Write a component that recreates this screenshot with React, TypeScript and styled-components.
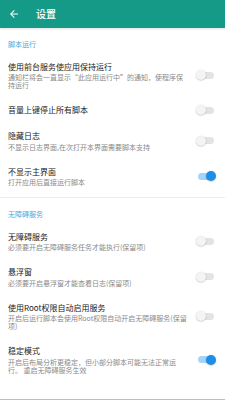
import React, { useState } from 'react';
import styled, { createGlobalStyle } from 'styled-components';

const GlobalStyle = createGlobalStyle`
  html, body {
    margin: 0;
    padding: 0;
    background: #ffffff;
  }
  body {
    font-family: "Noto Sans CJK SC", "Noto Sans", sans-serif;
    -webkit-font-smoothing: antialiased;
  }
`;

const Page = styled.div`
  width: 225px;
  min-height: 400px;
  display: flex;
  flex-direction: column;
  background: #ffffff;
`;

const Toolbar = styled.header`
  height: 28px;
  flex: 0 0 28px;
  display: flex;
  align-items: center;
  padding-left: 8px;
  background: #159a88;
  box-shadow: 0 1px 2px rgba(0, 0, 0, 0.12);
`;

const BackIcon = styled.svg`
  width: 12px;
  height: 12px;
  fill: #ffffff;
`;

const ToolbarTitle = styled.h1`
  margin: 0 0 0 16px;
  font-size: 10px;
  line-height: 12px;
  font-weight: 500;
  color: #ffffff;
`;

const List = styled.main`
  flex: 1;
  display: flex;
  flex-direction: column;
`;

const Category = styled.section`
  display: flex;
  flex-direction: column;
`;

const CategoryTitle = styled.div`
  padding: 11.5px 8px 5px;
  font-size: 7px;
  line-height: 9px;
  color: #4aa7dc;
`;

const Divider = styled.div`
  height: 1px;
  margin-top: 3px;
  background: #ececec;
`;

const Row = styled.div`
  display: flex;
  align-items: center;
  gap: 8px;
  padding: 8px 10px 8px 8px;
`;

const Texts = styled.div`
  width: 180px;
  flex: 0 0 180px;
  display: flex;
  flex-direction: column;
  gap: 1.5px;
`;

const Title = styled.div`
  font-size: 8px;
  line-height: 10px;
  color: #212121;
`;

const Summary = styled.div`
  font-size: 7px;
  line-height: 8px;
  color: #8a8a8a;
  text-spacing-trim: space-all;
`;

const SwitchBox = styled.button`
  position: relative;
  width: 20px;
  height: 10px;
  flex: 0 0 20px;
  padding: 0;
  border: 0;
  background: transparent;
  cursor: pointer;
`;

const Track = styled.span<{ $on: boolean }>`
  position: absolute;
  left: 2px;
  right: 2px;
  top: 1.5px;
  height: 7px;
  border-radius: 3.5px;
  background: ${p => (p.$on ? '#a6d3f8' : '#e3e3e3')};
`;

const Thumb = styled.span<{ $on: boolean }>`
  position: absolute;
  top: 0;
  left: ${p => (p.$on ? '10px' : '0')};
  width: 10px;
  height: 10px;
  border-radius: 50%;
  background: ${p => (p.$on ? '#1e8fe8' : '#f4f4f4')};
  box-shadow: 0 0.5px 1.5px rgba(0, 0, 0, 0.28);
`;

const BottomLine = styled.div`
  height: 1px;
  background: #bdbdbd;
`;

type PrefType = {
  title: string
  summary?: string
  on: boolean
}

const scriptPrefs: PrefType[] = [
  { title: '使用前台服务使应用保持运行', summary: '通知栏将会一直显示“此应用运行中”的通知，使程序保持运行', on: false },
  { title: '音量上键停止所有脚本', on: false },
  { title: '隐藏日志', summary: '不显示日志界面,在次打开本界面需要脚本支持', on: false },
  { title: '不显示主界面', summary: '打开应用后直接运行脚本', on: true },
];

const accessibilityPrefs: PrefType[] = [
  { title: '无障碍服务', summary: '必须要开启无障碍服务任务才能执行(保留项)', on: false },
  { title: '悬浮窗', summary: '必须要开启悬浮窗才能查看日志(保留项)', on: false },
  { title: '使用Root权限自动启用服务', summary: '开启后运行脚本会使用Root权限自动开启无障碍服务(保留项)', on: false },
  { title: '稳定模式', summary: '开启后布局分析更稳定，但小部分脚本可能无法正常运行。 重启无障碍服务生效', on: true },
];

const SwitchPref = (props: PrefType) => {
  const [on, setOn] = useState(props.on)

  return (
    <Row>
      <Texts>
        <Title>{props.title}</Title>
        {props.summary && <Summary>{props.summary}</Summary>}
      </Texts>
      <SwitchBox onClick={() => setOn(!on)} aria-pressed={on}>
        <Track $on={on}/>
        <Thumb $on={on}/>
      </SwitchBox>
    </Row>
  );
};

export default function App() {
  return (
    <>
      <GlobalStyle/>
      <Page>
        <Toolbar>
          <BackIcon viewBox="0 0 24 24">
            <path d="M20 11H7.83l5.59-5.59L12 4l-8 8 8 8 1.41-1.41L7.83 13H20v-2z"/>
          </BackIcon>
          <ToolbarTitle>设置</ToolbarTitle>
        </Toolbar>
        <List>
          <Category>
            <CategoryTitle>脚本运行</CategoryTitle>
            {scriptPrefs.map(p => <SwitchPref key={p.title} {...p}/>)}
          </Category>
          <Divider/>
          <Category>
            <CategoryTitle>无障碍服务</CategoryTitle>
            {accessibilityPrefs.map(p => <SwitchPref key={p.title} {...p}/>)}
          </Category>
        </List>
        <BottomLine/>
      </Page>
    </>
  );
}
